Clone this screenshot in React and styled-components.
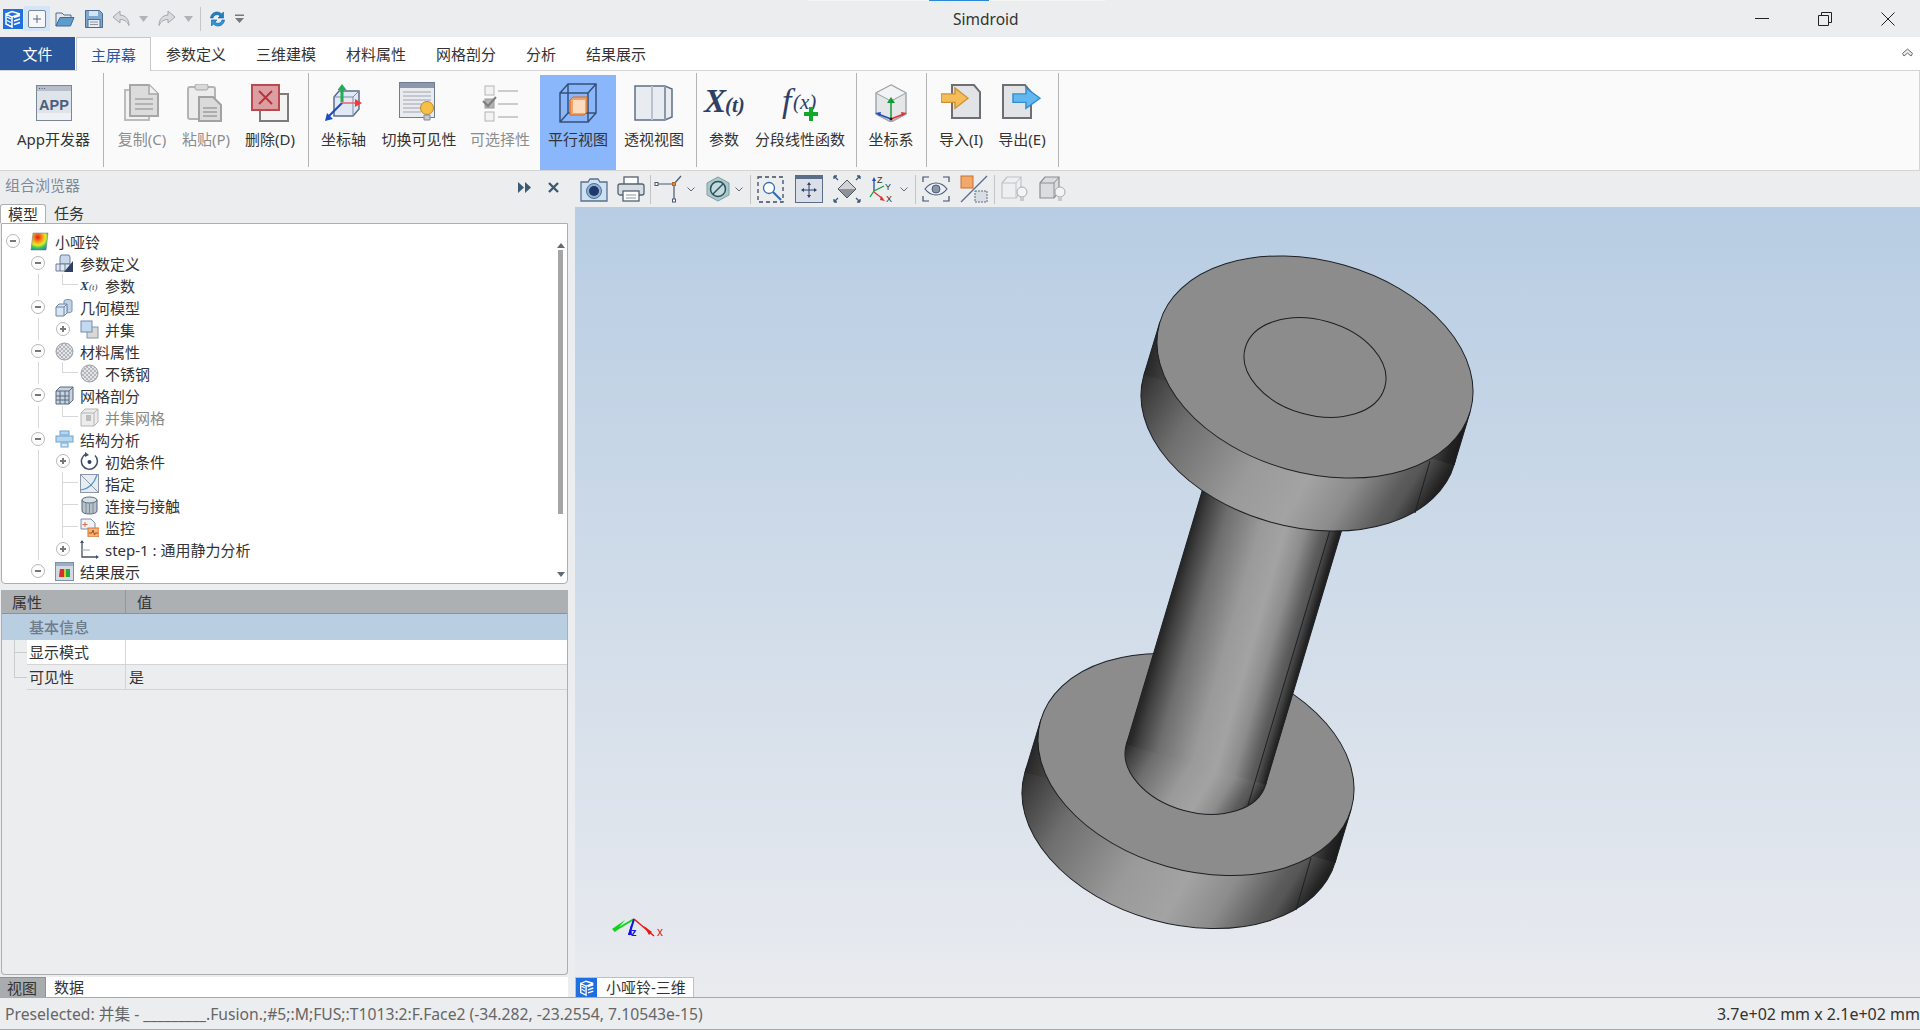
import React from "react";
import styled, { createGlobalStyle } from "styled-components";

const GlobalStyle = createGlobalStyle`
html, body { margin: 0; padding: 0; height: 100%; overflow: hidden; }
body { font-family: "Noto Sans", "Noto Sans CJK SC", sans-serif; font-size: 15px; color: #333; background: #ecedef; }
svg { display: block; }
`;

const Page = styled.div`
width: 1920px;
height: 1030px;
display: flex;
flex-direction: column;
background: #ecedef;
overflow: hidden;
`;

/* title bar */
const TitleBar = styled.div`
position: relative;
height: 37px;
flex: none;
display: flex;
align-items: center;
padding-left: 2px;
background: #ecedef;
`;
const LoadStrip = styled.div`
position: absolute;
left: 808px;
top: 0;
width: 297px;
height: 1px;
background: #f6f6f6;
&::after {
  content: "";
  position: absolute;
  left: 121px;
  width: 60px;
  height: 1px;
  background: #2b88d8;
}
`;
const QuickBtn = styled.div`
width: ${(p) => p.$w}px;
height: 25px;
display: flex;
align-items: center;
justify-content: center;
flex: none;
background: ${(p) => (p.$hover ? "#d3e5f6" : "transparent")};
`;
const QuickSep = styled.div`
width: 1px;
height: 24px;
margin: 0 1px 0 3px;
background: #c6c6c6;
`;
const AppTitle = styled.div`
margin-left: 708px;
font-size: 15.5px;
color: #333;
`;
const WinButtons = styled.div`
margin-left: auto;
display: flex;
padding-right: 25px;
gap: 49px;
color: #222;
`;

/* tab strip */
const TabStrip = styled.div`
height: 33px;
flex: none;
display: flex;
align-items: stretch;
background: #fff;
position: relative;
`;
const FileTab = styled.div`
width: 75px;
margin-right: 1px;
background: #2b579a;
color: #fff;
font-size: 15px;
display: flex;
align-items: center;
justify-content: center;
`;
const MenuTab = styled.div`
padding: 0 15px;
font-size: 15px;
display: flex;
align-items: center;
color: ${(p) => (p.$active ? "#2b579a" : "#333")};
background: ${(p) => (p.$active ? "#fafafa" : "transparent")};
${(p) => p.$active && "border: 1px solid #c8c8c8; border-bottom: none; margin-bottom: -1px; padding: 0 14px; position: relative; z-index: 1;"}
`;
const Collapse = styled.div`
position: absolute;
right: 7px;
top: 11px;
`;

/* ribbon */
const Ribbon = styled.div`
height: 99px;
flex: none;
display: flex;
background: #fafafa;
border-top: 1px solid #d4d4d4;
border-bottom: 1px solid #d4d4d4;
border-right: 1px solid #d4d4d4;
`;
const RibbonGroup = styled.div`
width: ${(p) => p.$w}px;
height: 94px;
margin-top: 2px;
display: flex;
flex: none;
box-sizing: border-box;
border-right: 1px solid #b4b4b4;
`;
const RibbonItem = styled.div`
width: ${(p) => p.$w}px;
height: 95px;
margin-top: 2px;
flex: none;
display: flex;
flex-direction: column;
align-items: center;
background: ${(p) => (p.$active ? "#8ab6fb" : "transparent")};
`;
const RibbonIcon = styled.div`
height: 40px;
margin-top: 8px;
display: flex;
align-items: center;
justify-content: center;
`;
const RibbonLabel = styled.div`
margin-top: 6px;
line-height: 20px;
font-size: 15px;
white-space: nowrap;
color: ${(p) => (p.$off ? "#8d8d8d" : "#333")};
`;

/* body */
const Main = styled.div`
flex: 1;
min-height: 0;
display: flex;
`;
const LeftPanel = styled.div`
width: 568px;
flex: none;
display: flex;
flex-direction: column;
`;
const PanelHeader = styled.div`
height: 33px;
flex: none;
box-sizing: border-box;
display: flex;
align-items: center;
padding: 0 9px 6px 5px;
color: #7d8a9a;
font-size: 15px;
`;
const PanelTools = styled.div`
margin-left: auto;
display: flex;
align-items: center;
gap: 17px;
padding-top: 6px;
`;
const ModelTabs = styled.div`
height: 19px;
flex: none;
display: flex;
font-size: 15px;
line-height: 19px;
`;
const ModelTab = styled.div`
width: ${(p) => (p.$active ? "46px" : "auto")};
box-sizing: border-box;
padding-left: ${(p) => (p.$active ? "7px" : "8px")};
background: ${(p) => (p.$active ? "#fff" : "transparent")};
${(p) => p.$active && "border: 1px solid #b0b0b0; border-bottom: none; border-radius: 3px 3px 0 0;"}
`;
const TreePanel = styled.div`
height: 361px;
flex: none;
box-sizing: border-box;
margin-left: 1px;
display: flex;
background: #fff;
border: 1px solid #aeaeae;
border-radius: 0 0 4px 4px;
`;
const TreeList = styled.div`
flex: 1;
padding-top: 6px;
`;
const TreeRowBox = styled.div`
position: relative;
height: 22px;
display: flex;
align-items: center;
padding-left: ${(p) => p.$level * 25 + 4}px;
font-size: 15px;
white-space: nowrap;
color: ${(p) => (p.$off ? "#888" : "#333")};
${(p) => p.$level === 2 && `
  &::before {
    content: "";
    position: absolute;
    left: 36px;
    top: 0;
    bottom: 0;
    width: 1px;
    background: #d8d8d8;
  }
`}
`;
const Branch = styled.div`
position: absolute;
left: 60px;
top: 0;
width: 15px;
height: ${(p) => (p.$last ? "11px" : "22px")};
border-left: 1px solid #d8d8d8;
&::after {
  content: "";
  position: absolute;
  left: 0;
  top: 10px;
  width: 15px;
  height: 1px;
  background: #d8d8d8;
}
`;
const Expander = styled.div`
width: 14px;
height: 14px;
flex: none;
box-sizing: border-box;
position: relative;
border-radius: 50%;
${(p) => p.$kind && "border: 1px solid #b8b8b8; background: #fff;"}
${(p) => p.$kind && `
  &::before {
    content: "";
    position: absolute;
    left: 3px;
    top: 5px;
    width: 6px;
    height: 2px;
    background: #777;
  }
`}
${(p) => p.$kind === "+" && `
  &::after {
    content: "";
    position: absolute;
    left: 5px;
    top: 3px;
    width: 2px;
    height: 6px;
    background: #777;
  }
`}
`;
const TreeIcon = styled.div`
width: 19px;
height: 19px;
margin: 0 6px 0 10px;
flex: none;
`;
const ScrollBar = styled.div`
width: 9px;
margin-right: 2px;
display: flex;
flex-direction: column;
align-items: center;
padding-top: 19px;
`;
const ScrollArrow = styled.div`
width: 0;
height: 0;
border-left: 4px solid transparent;
border-right: 4px solid transparent;
${(p) => (p.$down ? "border-top: 5px solid #5f6d78; margin-top: 58px;" : "border-bottom: 5px solid #5f6d78;")}
`;
const ScrollThumb = styled.div`
width: 5px;
height: 264px;
margin-top: 2px;
background: #a5a5a5;
`;
const PropsPanel = styled.div`
height: 385px;
flex: none;
box-sizing: border-box;
margin: 6px 0 2px 1px;
border: 1px solid #aeaeae;
border-top: none;
border-radius: 0 0 4px 4px;
`;
const PropsHead = styled.div`
height: 24px;
display: grid;
grid-template-columns: 123px 1fr;
background: #adb0b3;
border-bottom: 1px solid #8f9295;
box-sizing: border-box;
line-height: 24px;
`;
const PropsHeadCell = styled.div`
padding-left: ${(p) => (p.$second ? "11px" : "10px")};
${(p) => p.$second && "border-left: 1px solid #94979a;"}
`;
const PropsGroup = styled.div`
height: 26px;
line-height: 26px;
padding-left: 27px;
background: #bacee1;
color: #6e7c8c;
font-weight: 500;
`;
const PropsRow = styled.div`
height: 24.5px;
display: grid;
grid-template-columns: 25px 98px 1fr;
line-height: 24px;
`;
const PropIndent = styled.div`
position: relative;
&::before {
  content: "";
  position: absolute;
  left: 12px;
  top: 0;
  height: ${(p) => (p.$last ? "12px" : "100%")};
  width: 1px;
  background: #ccc;
}
&::after {
  content: "";
  position: absolute;
  left: 12px;
  top: 12px;
  width: 13px;
  height: 1px;
  background: #ccc;
}
`;
const PropName = styled.div`
padding-left: 2px;
background: ${(p) => (p.$alt ? "#ecedef" : "#fff")};
border-bottom: 1px solid #d4d4d4;
`;
const PropValue = styled.div`
padding-left: 3px;
background: ${(p) => (p.$alt ? "#ecedef" : "#fff")};
border-bottom: 1px solid #d4d4d4;
border-left: 1px solid #d4d4d4;
`;
const BottomTabs = styled.div`
height: 20px;
flex: none;
display: flex;
background: #fff;
line-height: 20px;
`;
const BottomTab = styled.div`
width: ${(p) => (p.$active ? "46px" : "auto")};
box-sizing: border-box;
padding-left: ${(p) => (p.$active ? "7px" : "8px")};
background: ${(p) => (p.$active ? "#a9acaf" : "transparent")};
${(p) => p.$active && "border-right: 1px solid #8f9295; border-top: 1px solid #8f9295;"}
`;

/* right side */
const RightPane = styled.div`
flex: 1;
margin-left: 7px;
display: flex;
flex-direction: column;
min-width: 0;
`;
const Toolbar = styled.div`
height: 36px;
flex: none;
display: flex;
align-items: center;
`;
const ToolBtn = styled.div`
width: ${(p) => p.$w}px;
margin-left: ${(p) => p.$ml || 0}px;
flex: none;
display: flex;
align-items: center;
justify-content: center;
`;
const ToolSep = styled.div`
width: 1px;
height: 29px;
margin-left: ${(p) => p.$ml || 0}px;
background: #c4c4c4;
flex: none;
`;
const Viewport = styled.div`
position: relative;
flex: 1;
min-height: 0;
background: linear-gradient(180deg, #b8cde3 0%, #e9ebef 100%);
`;
const ModelSvg = styled.svg`
width: 100%;
height: 100%;
`;
const ViewTab = styled.div`
position: absolute;
left: 0;
bottom: 0;
width: 119px;
height: 20px;
box-sizing: border-box;
display: flex;
align-items: center;
background: #fff;
border: 1px solid #c0c0c0;
border-bottom: none;
line-height: 19px;
`;
const ViewTabIcon = styled.div`
width: 21px;
height: 19px;
background: #1f6fe0;
display: flex;
align-items: center;
justify-content: center;
margin-right: 9px;
`;

/* status */
const StatusBar = styled.div`
height: 33px;
flex: none;
box-sizing: border-box;
display: flex;
align-items: center;
justify-content: space-between;
padding-left: 5px;
background: #ecedef;
border-top: 1px solid #a8a8a8;
border-bottom: 1px solid #a8a8a8;
font-size: 15.7px;
color: #666;
white-space: nowrap;
`;
const StatusRight = styled.div`
color: #333;
font-size: 16px;
`;

/* icons */
const Svg = ({ s = 40, children }) => (
  <svg width={s} height={s} viewBox={`0 0 ${s} ${s}`} fill="none">{children}</svg>
);

const LogoIcon = ({ s = 20 }) => (
  <svg width={s} height={s} viewBox="0 0 20 20" fill="none">
    <rect width="20" height="20" fill="#1f6fe0" />
    <path d="M3 5l6-2.5 8 2.5M3 5v10l6 3V8L3 5zM9 8l8-3M11 8.5l6-2M11 12l6-2M11 15.5l6-2" stroke="#fff" strokeWidth="1.5" />
    <path d="M4 8l4 2M4 11.5l4 2" stroke="#fff" strokeWidth="1.3" />
  </svg>
);
const NewIcon = () => (
  <svg width="18" height="18" viewBox="0 0 18 18" fill="none">
    <rect x=".5" y=".5" width="17" height="17" rx="1.5" fill="#f6f7f9" stroke="#7b8796" />
    <path d="M9 5v8M5 9h8" stroke="#58687e" />
  </svg>
);
const OpenIcon = () => (
  <svg width="20" height="18" viewBox="0 0 20 18" fill="none">
    <path d="M1 3h6l2 2h7v3H5L1 16z" fill="#e5e9ee" stroke="#4d6d90" />
    <path d="M1 16L5 7.5h14L15.5 16z" fill="#5f9bcb" stroke="#3f6d96" />
  </svg>
);
const SaveIcon = () => (
  <svg width="18" height="18" viewBox="0 0 18 18" fill="none">
    <path d="M.5.5h14l3 3v14H.5z" fill="#7ea8cf" stroke="#4c6a8a" />
    <rect x="4" y="1" width="9" height="5" fill="#d5e4f2" />
    <rect x="3" y="9.5" width="12" height="8" fill="#e9edf1" stroke="#4c6a8a" />
    <path d="M5 12h8M5 14.5h8" stroke="#8a98a8" />
  </svg>
);
const UndoIcon = ({ flip }) => (
  <svg width="19" height="18" viewBox="0 0 19 18" fill="none" style={flip ? { transform: "scaleX(-1)" } : undefined}>
    <path d="M8 1L1 7l7 6V9.5c4 0 7 1.5 9 6 0-6-3-10-9-10.5z" fill="#d9dbde" stroke="#a2a6ab" />
  </svg>
);
const Drop = ({ c = "#b0b3b7" }) => (
  <svg width="9" height="6" viewBox="0 0 9 6"><path d="M0 0h9L4.5 6z" fill={c} /></svg>
);
const RefreshIcon = () => (
  <svg width="17" height="18" viewBox="0 0 17 18" fill="none">
    <path d="M1.5 8C2 4 5 2 8 2c2 0 3.500.7 4.500 2l2-2v6H9l2-2c-1-1-2-1.300-3-1.300-2 0-3.500 1.300-4 3.300z" fill="#1e7fc4" stroke="#155d92" strokeWidth=".6" />
    <path d="M15.500 10c-.5 4-3.500 6-6.500 6-2 0-3.500-.7-4.500-2l-2 2v-6H8l-2 2c1 1 2 1.300 3 1.300 2 0 3.500-1.300 4-3.300z" fill="#2a95d8" stroke="#155d92" strokeWidth=".6" />
  </svg>
);
const MoreIcon = () => (
  <svg width="9" height="9" viewBox="0 0 9 9"><path d="M0 .5h9v1.500H0zM0 4h9L4.500 9z" fill="#75787c" /></svg>
);

const AppIcon = () => (
  <Svg s={36}>
    <rect x=".5" y=".5" width="35" height="35" fill="#dfe3ea" stroke="#7a8797" />
    <rect x="1" y="1" width="34" height="5" fill="#b7bec9" />
    <path d="M3 3.500h1M5.500 3.500h1M8 3.500h1" stroke="#4b5f7e" />
    <rect x="1" y="28" width="34" height="7" fill="#eef0f4" />
    <text x="18" y="25" textAnchor="middle" fontFamily="Liberation Sans, sans-serif" fontWeight="700" fontSize="14.500" fill="#4b5f7e">APP</text>
  </Svg>
);
const CopyIcon = () => (
  <Svg s={38}>
    <path d="M2 6h24v30H2z" fill="#f2f2f2" stroke="#bcbcbc" strokeWidth="2" />
    <path d="M7 1h19l9 9v22H7z" fill="#dcdcdc" stroke="#a6a6a6" strokeWidth="2" />
    <path d="M26 1v9h9" fill="#efefef" stroke="#a6a6a6" strokeWidth="1.500" />
    <path d="M12 15h18M12 20h18M12 25h18" stroke="#a4a4a4" strokeWidth="1.500" />
  </Svg>
);
const PasteIcon = () => (
  <Svg s={38}>
    <rect x="1" y="3" width="27" height="32" rx="2" fill="#ececec" stroke="#b4b4b4" strokeWidth="2" />
    <rect x="8" y="0" width="13" height="6" rx="2" fill="#d8d8d8" stroke="#a6a6a6" />
    <path d="M12 13h14l8 8v16H12z" fill="#dadada" stroke="#a2a2a2" strokeWidth="2" />
    <path d="M16 24h14M16 28h14M16 32h14" stroke="#9e9e9e" strokeWidth="1.300" />
  </Svg>
);
const DeleteIcon = () => (
  <Svg s={38}>
    <rect x="9" y="10" width="28" height="27" fill="#f3f3f3" stroke="#7c7c7c" strokeWidth="2" />
    <rect x="1" y="1" width="27" height="25" fill="#dc9ea0" stroke="#b84a50" strokeWidth="2" />
    <path d="M8 7l13 13M21 7L8 20" stroke="#b8323a" strokeWidth="1.800" />
  </Svg>
);
const AxisIcon = () => (
  <Svg s={40}>
    <path d="M10 14l5-6h20v18l-6 7H10z" fill="#dfe8f4" stroke="#5b6d88" strokeWidth="1.500" />
    <path d="M10 14h19v19M29 14l6-6" stroke="#7d8da4" />
    <path d="M16 2l-4.500 6h3V20h3V8h3z" fill="#1fae52" transform="translate(2 -1)" />
    <path d="M18 20h14" stroke="#f06060" strokeWidth="1.500" />
    <path d="M31 16l7 4-7 4z" fill="#ee3b3b" />
    <path d="M18 20L4 34" stroke="#1d4fc0" strokeWidth="2.200" />
    <path d="M1 38l2-8 6 6z" fill="#1d4fc0" />
  </Svg>
);
const ToggleIcon = () => (
  <svg width="40" height="42" viewBox="0 0 40 42" fill="none">
    <rect x=".5" y=".5" width="35" height="35" fill="#e9ebef" stroke="#6e7d92" />
    <rect x="1" y="1" width="34" height="5" fill="#8c98aa" />
    <path d="M4 10h28M4 14h28M4 18h28M4 22h20M4 26h18M4 30h18" stroke="#9ba4b1" />
    <circle cx="28" cy="26" r="6.500" fill="#f6bf45" stroke="#b98a28" />
    <path d="M25 33h6v5h-6z" fill="#c5cbd4" stroke="#808a98" />
  </svg>
);
const SelectIcon = () => (
  <svg width="42" height="38" viewBox="-4 0 42 38" fill="none">
    <rect x="2" y="2" width="9" height="9" fill="#f3f3f3" stroke="#b4b4b4" />
    <rect x="2" y="15" width="9" height="9" fill="#b4b4b4" stroke="#9a9a9a" />
    <path d="M0 17l5 5 8-9" stroke="#7d7d7d" strokeWidth="2" />
    <rect x="2" y="28" width="9" height="9" fill="#f3f3f3" stroke="#b4b4b4" />
    <path d="M15 7h20M15 20h20M15 33h20" stroke="#bdbdbd" strokeWidth="1.500" />
  </svg>
);
const ParallelIcon = () => (
  <Svg s={40}>
    <path d="M2 10h28v29H2zM2 10l8-9h28v29l-8 9M30 10l8-9M10 1v29h28M10 30l-8 9" stroke="#35507a" strokeWidth="1.500" />
    <path d="M12 17l3-3h14v15l-3 3H12z" fill="#f0a468" stroke="#d06a22" />
    <path d="M15 17h12v13H15z" fill="#fbdcc0" />
  </Svg>
);
const PerspIcon = () => (
  <Svg s={40}>
    <path d="M1 3l7 2h22v30H8l-7 2z" fill="#f2f4f7" />
    <path d="M1 3h30l7 3v28l-7 3H1z" fill="#e8ecf1" stroke="#5d6f8a" strokeWidth="1.500" />
    <path d="M31 3v34M18 3v34" stroke="#b9c2ce" strokeWidth="2" />
    <path d="M31 3v34" stroke="#5d6f8a" />
  </Svg>
);
const XtIcon = () => (
  <svg width="50" height="40" viewBox="-4 -2 50 40">
    <text x="1" y="27" fontFamily="Liberation Serif, serif" fontStyle="italic" fontWeight="700" fontSize="33" fill="#2e4066">X</text>
    <text x="22" y="27" fontFamily="Liberation Serif, serif" fontStyle="italic" fontWeight="700" fontSize="21" fill="#2e4066">(t)</text>
  </svg>
);
const FxIcon = () => (
  <svg width="52" height="40" viewBox="-4 -2 52 40">
    <text x="4" y="27" fontFamily="Liberation Serif, serif" fontStyle="italic" fontSize="34" fill="#2e4066">f</text>
    <text x="15" y="24" fontFamily="Liberation Serif, serif" fontStyle="italic" fontSize="21" fill="#2e4066">(x)</text>
    <path d="M31 22h4v5h5v4h-5v5h-4v-5h-5v-4h5z" fill="#12a92a" />
  </svg>
);
const SystemIcon = () => (
  <Svg s={38}>
    <path d="M19 1l15 8v21l-15 8-15-8V9z" fill="#e5e6e8" stroke="#a2a6ab" strokeWidth="1.500" />
    <path d="M4 9l15 8 15-8" stroke="#b0b4b9" />
    <path d="M19 1l15 8-15 8L4 9z" fill="#f2f3f4" stroke="#a2a6ab" />
    <path d="M19 34V17" stroke="#119b33" strokeWidth="1.500" />
    <path d="M15 19l4-6 4 6z" fill="#119b33" />
    <path d="M19 35L6 30" stroke="#1d4fc0" strokeWidth="1.800" />
    <path d="M19 35l13-5" stroke="#e33131" strokeWidth="1.800" />
    <path d="M3 29l6-1-1 4z" fill="#1d4fc0" />
    <path d="M35 29l-6-1 1 4z" fill="#e33131" />
    <circle cx="19" cy="35" r="1.500" fill="#222" />
  </Svg>
);
const ImportIcon = () => (
  <Svg s={40}>
    <path d="M11 2h22l6 7v26H11z" fill="#e1e3e6" stroke="#6d6f73" strokeWidth="2" />
    <path d="M0 14h14V7l13 12-13 12v-7H0z" transform="translate(0 -1) scale(1 .85)" fill="#f4bd5a" stroke="#cf9133" strokeWidth="1.500" />
  </Svg>
);
const ExportIcon = () => (
  <Svg s={40}>
    <path d="M1 2h22l6 7v26H1z" fill="#e1e3e6" stroke="#6d6f73" strokeWidth="2" />
    <path d="M11 14h13V7l14 12-14 12v-7H11z" transform="translate(0 -1) scale(1 .85)" fill="#62b8ee" stroke="#2f8fd0" strokeWidth="1.500" />
  </Svg>
);

/* tree icons */
const RainbowIcon = () => (
  <svg width="19" height="19" viewBox="0 0 19 19">
    <defs>
      <radialGradient id="heat" cx=".4" cy=".25" r=".85">
        <stop offset="0" stopColor="#e51818" />
        <stop offset=".35" stopColor="#f7a21a" />
        <stop offset=".55" stopColor="#e8e82a" />
        <stop offset=".75" stopColor="#34c65a" />
        <stop offset="1" stopColor="#1d7be0" />
      </radialGradient>
    </defs>
    <path d="M3 1h15l-2 17H1z" fill="url(#heat)" stroke="#5b6d88" strokeWidth=".5" />
  </svg>
);
const ParamTreeIcon = () => (
  <Svg s={19}>
    <path d="M5 3l1-2h8l1 2v7H5z" fill="#c8d8ec" stroke="#6a7d98" />
    <path d="M1 10h14v7H1zM5 10v7M10 10v7" fill="#e3e8ef" stroke="#6a7d98" />
    <path d="M18 7v11h-9z" fill="#2e4066" />
  </Svg>
);
const XtSmall = () => (
  <svg width="19" height="19" viewBox="0 0 19 19">
    <text x="0" y="14" fontFamily="Liberation Serif, serif" fontStyle="italic" fontWeight="700" fontSize="13" fill="#2e4066">X</text>
    <text x="9" y="14" fontFamily="Liberation Serif, serif" fontStyle="italic" fontSize="9" fill="#2e4066">(t)</text>
  </svg>
);
const GeoIcon = () => (
  <Svg s={19}>
    <path d="M9 3c0-2 8-2 8 0v10c0 1.500-3 2-5 1.800V8H9z" fill="#bcd3ea" stroke="#7d8ea5" />
    <path d="M1 9l3-3h8v9l-3 3H1z" fill="#d8e5f3" stroke="#6f84a0" />
    <path d="M1 9h8v9M9 9l3-3" stroke="#6f84a0" />
  </Svg>
);
const UnionIcon = () => (
  <Svg s={19}>
    <rect x="7" y="7" width="11" height="11" fill="#d8d8d8" stroke="#8a96a5" />
    <rect x="1" y="1" width="11" height="11" fill="#c3d9ef" stroke="#6f8db0" />
  </Svg>
);
const MatIcon = () => (
  <Svg s={19}>
    <defs>
      <pattern id="mat" width="4" height="4" patternUnits="userSpaceOnUse">
        <rect width="4" height="4" fill="#e3e4e6" />
        <rect width="2" height="2" fill="#b3b6ba" />
        <rect x="2" y="2" width="2" height="2" fill="#b3b6ba" />
      </pattern>
    </defs>
    <circle cx="9.500" cy="9.500" r="8.500" fill="url(#mat)" stroke="#9a9da2" />
  </Svg>
);
const MeshIcon = () => (
  <Svg s={19}>
    <path d="M1 5l4-4h13v13l-4 4H1z" fill="#c9d3e0" stroke="#56677f" />
    <path d="M1 5h13v13M14 5l4-4M5 5v13M10 5v13M1 10h13M1 14h13" stroke="#56677f" />
  </Svg>
);
const MeshOffIcon = () => (
  <Svg s={19}>
    <path d="M1 5l4-4h13v13l-4 4H1z" fill="#ececec" stroke="#b4b4b4" />
    <path d="M1 5h13v13M14 5l4-4" stroke="#b4b4b4" />
    <rect x="6" y="7" width="5" height="6" fill="#bdbdbd" />
  </Svg>
);
const AnalysisIcon = () => (
  <Svg s={19}>
    <rect x="5" y="1" width="9" height="4" fill="#b6d6ee" stroke="#6aa4d0" />
    <rect x="1" y="6" width="17" height="6" fill="#b6d6ee" stroke="#6aa4d0" />
    <rect x="6" y="13" width="7" height="4" fill="#d8e8f4" stroke="#6aa4d0" />
  </Svg>
);
const InitIcon = () => (
  <Svg s={19}>
    <path d="M15 3.500A8 8 0 1 1 6 2" stroke="#3f5168" strokeWidth="1.500" />
    <path d="M5 0v5l4-2z" fill="#3f5168" />
    <circle cx="9.500" cy="10" r="2" fill="#2e4066" />
  </Svg>
);
const AssignIcon = () => (
  <Svg s={19}>
    <rect x=".5" y=".5" width="18" height="18" fill="#e8ebf0" stroke="#8a98aa" />
    <path d="M1 1l17 17" stroke="#8a98aa" />
    <path d="M1 16C8 15 14 10 17 1" stroke="#4f92c8" strokeWidth="1.200" />
  </Svg>
);
const ContactIcon = () => (
  <Svg s={19}>
    <path d="M2 4v11c0 4 15 4 15 0V4z" fill="#b6c2c8" stroke="#56677f" />
    <ellipse cx="9.500" cy="4" rx="7.500" ry="3" fill="#d7e0e4" stroke="#56677f" />
    <path d="M6 7v10M9.500 7.500v10M13 7v10" stroke="#7d8c96" />
  </Svg>
);
const MonitorIcon = () => (
  <Svg s={19}>
    <path d="M1 1h10l4 4v6H1z" fill="#f0f2f5" stroke="#7d8ea5" />
    <path d="M5 4v5M2.500 6.500h5" stroke="#d96a4a" />
    <rect x="8" y="10" width="11" height="9" fill="#f6b27a" stroke="#d07a3a" />
    <path d="M9 15h3l1-3 1.500 5 1-2H18" stroke="#a8501c" />
  </Svg>
);
const StepIcon = () => (
  <Svg s={19}>
    <path d="M2 1v16h15" stroke="#3f5168" strokeWidth="1.300" />
    <path d="M2 10l8 0" stroke="#9aa8b8" />
    <path d="M0 3l2-3 2 3zM16 15l3 2-3 2z" fill="#3f5168" />
  </Svg>
);
const ResultIcon = () => (
  <Svg s={19}>
    <rect x=".5" y=".5" width="18" height="18" fill="#d3dae3" stroke="#7d8ea5" />
    <rect x="1" y="1" width="17" height="3" fill="#9faebf" />
    <path d="M5 7h10v8H4z" fill="#e8c026" />
    <path d="M5 7h4v8H4z" fill="#d92c2c" />
    <path d="M11 7h4v8h-4z" fill="#24a84a" />
  </Svg>
);

/* viewport toolbar icons */
const CameraIcon = () => (
  <svg width="28" height="25" viewBox="0 0 28 25" fill="none">
    <path d="M1 5h7l2-3h8l2 3h7v19H1z" fill="#cfe0f2" stroke="#55708f" strokeWidth="1.300" />
    <circle cx="14" cy="14" r="7.500" fill="#8fb0d2" stroke="#55708f" />
    <circle cx="14" cy="14" r="5" fill="#1f3a6a" />
  </svg>
);
const PrinterIcon = () => (
  <svg width="28" height="26" viewBox="0 0 28 26" fill="none">
    <rect x="7" y="1" width="14" height="8" fill="#fff" stroke="#54616f" strokeWidth="1.300" />
    <rect x="1" y="8" width="26" height="11" rx="2" fill="#d7dce2" stroke="#54616f" strokeWidth="1.300" />
    <rect x="6" y="15" width="16" height="10" fill="#fff" stroke="#54616f" strokeWidth="1.300" />
    <path d="M9 19h10M9 22h10" stroke="#8a96a3" />
  </svg>
);
const MeasureIcon = () => (
  <svg width="30" height="28" viewBox="0 0 30 28" fill="none">
    <path d="M3 9h17M20 9v15M20 9l7-8" stroke="#4a5a70" strokeWidth="1.200" />
    <rect x="1" y="7.500" width="3" height="3" fill="#fff" stroke="#4a5a70" />
    <rect x="18.500" y="7.500" width="3" height="3" fill="#e08a3a" stroke="#b4642a" />
    <rect x="18.500" y="24" width="3" height="3" fill="#fff" stroke="#4a5a70" />
  </svg>
);
const Chevron = () => (
  <svg width="8" height="5" viewBox="0 0 8 5" fill="none"><path d="M.5.5L4 4 7.500.5" stroke="#5f6b78" /></svg>
);
const ProhibitIcon = () => (
  <svg width="24" height="26" viewBox="0 0 24 26" fill="none">
    <path d="M12 1l11 6v12l-11 6L1 19V7z" fill="#a9c9cb" stroke="#7f9da0" />
    <circle cx="12" cy="13" r="7.500" fill="#c2dbdc" stroke="#2f4f58" strokeWidth="1.500" />
    <path d="M7 18l10-10" stroke="#2f4f58" strokeWidth="1.500" />
  </svg>
);
const ZoomBoxIcon = () => (
  <svg width="27" height="27" viewBox="0 0 27 27" fill="none">
    <rect x="1" y="1" width="25" height="25" stroke="#3d4c60" strokeWidth="1.300" strokeDasharray="4 3" />
    <circle cx="12" cy="12" r="5.500" fill="#fff" stroke="#2f6fb0" strokeWidth="1.300" />
    <path d="M16 16l8 8" stroke="#2f6fb0" strokeWidth="2.200" />
  </svg>
);
const FitIcon = () => (
  <svg width="28" height="28" viewBox="0 0 28 28" fill="none">
    <rect x=".5" y=".5" width="27" height="27" fill="#dbe0e8" stroke="#5a6d88" />
    <rect x="1" y="1" width="26" height="3" fill="#5a6d88" />
    <path d="M14 9v12M8 15h12" stroke="#2e4066" />
    <path d="M14 7l-2 3h4zM14 23l-2-3h4zM6 15l3-2v4zM22 15l-3-2v4z" fill="#2e4066" />
  </svg>
);
const IsoIcon = () => (
  <svg width="28" height="28" viewBox="0 0 28 28" fill="none">
    <path d="M14 5l9 9-9 9-9-9z" fill="#8e9196" />
    <path d="M14 5l9 9H5z" fill="#cfd2d6" />
    <path d="M14 5l9 9-9 9-9-9z" stroke="#505860" />
    <path d="M1 1h3M1 1v3M27 1h-3M27 1v3M1 27h3M1 27v-3M27 27h-3M27 27v-3M1 1l4 4M27 1l-4 4M1 27l4-4M27 27l-4-4" stroke="#3d5a7c" strokeWidth="1.300" />
  </svg>
);
const AxesIcon = () => (
  <svg width="26" height="28" viewBox="0 0 26 28" fill="none">
    <path d="M5 16V5" stroke="#1d4fc0" strokeWidth="1.300" />
    <path d="M3 6l2-4 2 4z" fill="#1d4fc0" />
    <path d="M5 16l10-5" stroke="#12a040" strokeWidth="1.300" />
    <path d="M5 16L1 22" stroke="#12a040" strokeWidth="1.300" />
    <path d="M5 17l9 7" stroke="#e33131" strokeWidth="1.300" />
    <path d="M12 21l4 5-5-1z" fill="#e33131" />
    <text x="8" y="8" fontFamily="Liberation Sans, sans-serif" fontSize="9" fill="#333">Z</text>
    <text x="16" y="15" fontFamily="Liberation Sans, sans-serif" fontSize="9" fill="#333">Y</text>
    <text x="17" y="27" fontFamily="Liberation Sans, sans-serif" fontSize="9" fill="#333">X</text>
  </svg>
);
const EyeIcon = () => (
  <svg width="28" height="26" viewBox="0 0 28 26" fill="none">
    <path d="M1 6V1h6M21 1h6v5M1 20v5h6M21 25h6v-5" stroke="#3d5068" strokeWidth="1.200" />
    <path d="M3 13c6-8 16-8 22 0-6 8-16 8-22 0z" fill="#e9eef3" stroke="#4a5c74" strokeWidth="1.200" />
    <circle cx="14" cy="13" r="4" fill="#8a97a8" stroke="#4a5c74" />
  </svg>
);
const SplitIcon = () => (
  <svg width="28" height="28" viewBox="0 0 28 28" fill="none">
    <rect x="1" y="1" width="12" height="12" fill="#f2a868" stroke="#c8702e" />
    <rect x="15" y="16" width="12" height="11" fill="#d9dee5" stroke="#5a6d88" strokeDasharray="2 1" />
    <path d="M27 1L1 27" stroke="#5a6d88" strokeWidth="1.200" />
  </svg>
);
const BulbCube = ({ dark }) => (
  <svg width="28" height="28" viewBox="0 0 28 28" fill="none">
    <path d="M1 8l5-6h14v15l-5 6H1z" fill={dark ? "#dadcdf" : "#eeeff1"} stroke={dark ? "#8b8e92" : "#c0c2c5"} strokeWidth="1.200" />
    <path d="M1 8h14v15M15 8l5-6" stroke={dark ? "#8b8e92" : "#c0c2c5"} />
    <circle cx="21" cy="17" r="5" fill="#f4f4f4" stroke="#a8aaad" />
    <path d="M19 22h4v4h-4z" fill="#c8cacd" />
  </svg>
);

/* 3d model, computed from the ellipse parameters */
const TILT = (15.8 * Math.PI) / 180;
const cosT = Math.cos(TILT);
const sinT = Math.sin(TILT);
const pointOn = (c, rx, ry, t) => [
  c[0] + rx * Math.cos(t) * cosT - ry * Math.sin(t) * sinT,
  c[1] + rx * Math.cos(t) * sinT + ry * Math.sin(t) * cosT,
];
const tangents = (c, rx, ry, d) => {
  const dx = d[0] * cosT + d[1] * sinT;
  const dy = -d[0] * sinT + d[1] * cosT;
  const t = Math.atan2(-ry * dx, rx * dy);
  const a = pointOn(c, rx, ry, t);
  const b = pointOn(c, rx, ry, t + Math.PI);
  return a[0] < b[0] ? [a, b] : [b, a];
};
const SHADE = [
  [0, "#282828"], [0.06, "#404040"], [0.2, "#6e6e6e"], [0.45, "#9a9a9a"], [0.62, "#a3a3a3"],
  [0.75, "#8c8c8c"], [0.87, "#5c5c5c"], [0.9, "#565656"], [0.97, "#242424"], [1, "#1a1a1a"],
];
const EDGE = "#1c2024";
const FACE = "#8c8c8c";

const Prism = ({ id, c, rx, ry, d, cap }) => {
  const [l, r] = tangents(c, rx, ry, d);
  const l2 = [l[0] + d[0], l[1] + d[1]];
  const r2 = [r[0] + d[0], r[1] + d[1]];
  const deg = (TILT * 180) / Math.PI;
  const end = [c[0] + d[0], c[1] + d[1]];
  return (
    <g>
      <defs>
        <linearGradient id={id} gradientUnits="userSpaceOnUse" x1={l[0]} y1={l[1]} x2={r[0]} y2={r[1]}>
          {SHADE.map(([o, col]) => <stop key={o} offset={o} stopColor={col} />)}
        </linearGradient>
      </defs>
      <ellipse cx={end[0]} cy={end[1]} rx={rx} ry={ry} transform={`rotate(${deg} ${end[0]} ${end[1]})`} fill={`url(#${id})`} stroke={EDGE} />
      <polygon points={[l, r, r2, l2].map((p) => p.join(",")).join(" ")} fill={`url(#${id})`} />
      <path d={`M${l[0]} ${l[1]}L${l2[0]} ${l2[1]}M${r[0]} ${r[1]}L${r2[0]} ${r2[1]}`} stroke={EDGE} />
      {cap && <ellipse cx={c[0]} cy={c[1]} rx={rx} ry={ry} transform={`rotate(${deg} ${c[0]} ${c[1]})`} fill={FACE} stroke={EDGE} />}
    </g>
  );
};

const Dumbbell = () => (
  <ModelSvg viewBox="575 207 1345 790" preserveAspectRatio="none">
    <Prism id="lowDisk" c={[1196, 764.5]} rx={161.5} ry={106} d={[-16, 53]} cap />
    <path d="M1311 858L1296 910" stroke={EDGE} />
    <Prism id="stem" c={[1299, 420]} rx={72.5} ry={47.6} d={[-103, 344.5]} />
    <path d="M1248 805L1330 530" stroke={EDGE} />
    <Prism id="topDisk" c={[1315, 367]} rx={161.5} ry={106} d={[-16, 53]} cap />
    <path d="M1430 461L1415 513" stroke={EDGE} />
    <ellipse cx="1315" cy="367.500" rx="72.500" ry="47.600" transform="rotate(15.8 1315 367.500)" fill="none" stroke={EDGE} />
    <path d="M634 919L614 931" stroke="#12d21c" strokeWidth="2" />
    <path d="M625 920l-10 12-3-3z" fill="#12d21c" />
    <path d="M634 919l-5 16" stroke="#1414e0" strokeWidth="2" />
    <path d="M631 925l1 10-4 0z" fill="#1414e0" />
    <path d="M634 919l20 17" stroke="#ee1414" strokeWidth="1.500" />
    <path d="M644 926l8 6-3 3z" fill="#ee1414" />
    <text x="631" y="936" fontFamily="Liberation Sans, sans-serif" fontSize="11" fontWeight="700" fill="#1414e0">z</text>
    <text x="657" y="936" fontFamily="Liberation Sans, sans-serif" fontSize="12" fill="#ee1414">x</text>
  </ModelSvg>
);

/* data */
const MENU = ["参数定义", "三维建模", "材料属性", "网格剖分", "分析", "结果展示"];
const RIBBON = [
  { w: 104, items: [{ w: 107, label: "App开发器", Icon: AppIcon }] },
  { w: 205, items: [
    { w: 76, label: "复制(C)", Icon: CopyIcon, off: true },
    { w: 52, label: "粘贴(P)", Icon: PasteIcon, off: true },
    { w: 76, label: "删除(D)", Icon: DeleteIcon },
  ] },
  { w: 388, items: [
    { w: 69, label: "坐标轴", Icon: AxisIcon },
    { w: 82, label: "切换可见性", Icon: ToggleIcon },
    { w: 80, label: "可选择性", Icon: SelectIcon, off: true },
    { w: 76, label: "平行视图", Icon: ParallelIcon, active: true },
    { w: 76, label: "透视视图", Icon: PerspIcon },
  ] },
  { w: 160, items: [
    { w: 54, label: "参数", Icon: XtIcon },
    { w: 98, label: "分段线性函数", Icon: FxIcon },
  ] },
  { w: 70, items: [{ w: 68, label: "坐标系", Icon: SystemIcon }] },
  { w: 132, items: [
    { w: 68, label: "导入(I)", Icon: ImportIcon },
    { w: 54, label: "导出(E)", Icon: ExportIcon },
  ] },
];
const TREE = [
  { level: 0, exp: "-", label: "小哑铃", Icon: RainbowIcon },
  { level: 1, exp: "-", label: "参数定义", Icon: ParamTreeIcon },
  { level: 2, branch: "last", label: "参数", Icon: XtSmall },
  { level: 1, exp: "-", label: "几何模型", Icon: GeoIcon },
  { level: 2, exp: "+", label: "并集", Icon: UnionIcon },
  { level: 1, exp: "-", label: "材料属性", Icon: MatIcon },
  { level: 2, branch: "last", label: "不锈钢", Icon: MatIcon },
  { level: 1, exp: "-", label: "网格剖分", Icon: MeshIcon },
  { level: 2, branch: "last", label: "并集网格", Icon: MeshOffIcon, off: true },
  { level: 1, exp: "-", label: "结构分析", Icon: AnalysisIcon },
  { level: 2, exp: "+", label: "初始条件", Icon: InitIcon },
  { level: 2, branch: "mid", label: "指定", Icon: AssignIcon },
  { level: 2, branch: "mid", label: "连接与接触", Icon: ContactIcon },
  { level: 2, branch: "mid", label: "监控", Icon: MonitorIcon },
  { level: 2, exp: "+", label: "step-1 : 通用静力分析", Icon: StepIcon },
  { level: 1, exp: "-", label: "结果展示", Icon: ResultIcon },
];

const App = () => (
  <Page>
    <GlobalStyle />
    <TitleBar>
      <LoadStrip />
      <QuickBtn $w={22}><LogoIcon /></QuickBtn>
      <QuickBtn $w={26} $hover><NewIcon /></QuickBtn>
      <QuickBtn $w={30}><OpenIcon /></QuickBtn>
      <QuickBtn $w={28}><SaveIcon /></QuickBtn>
      <QuickBtn $w={26}><UndoIcon /></QuickBtn>
      <QuickBtn $w={18}><Drop /></QuickBtn>
      <QuickBtn $w={28}><UndoIcon flip /></QuickBtn>
      <QuickBtn $w={17}><Drop /></QuickBtn>
      <QuickSep />
      <QuickBtn $w={31}><RefreshIcon /></QuickBtn>
      <QuickBtn $w={12}><MoreIcon /></QuickBtn>
      <AppTitle>Simdroid</AppTitle>
      <WinButtons>
        <svg width="14" height="14" viewBox="0 0 14 14" fill="none"><path d="M0 6.500h14" stroke="currentColor" /></svg>
        <svg width="14" height="14" viewBox="0 0 14 14" fill="none"><path d="M3.500 3V.5h10V10.500H11M.5 3.500h10v10H.5z" stroke="currentColor" /></svg>
        <svg width="14" height="14" viewBox="0 0 14 14" fill="none"><path d="M.5.500l13 13M13.500.5l-13 13" stroke="currentColor" /></svg>
      </WinButtons>
    </TitleBar>

    <TabStrip>
      <FileTab>文件</FileTab>
      <MenuTab $active>主屏幕</MenuTab>
      {MENU.map((m) => <MenuTab key={m}>{m}</MenuTab>)}
      <Collapse>
        <svg width="11" height="9" viewBox="0 0 11 9" fill="none"><path d="M5.500 1L10.500 5.500 9 8 5.500 5 2 8 .5 5.500z" fill="#eee" stroke="#666" /></svg>
      </Collapse>
    </TabStrip>

    <Ribbon>
      {RIBBON.map((g) => (
        <RibbonGroup key={g.items[0].label} $w={g.w}>
          {g.items.map(({ w, label, Icon, off, active }) => (
            <RibbonItem key={label} $w={w} $active={active}>
              <RibbonIcon><Icon /></RibbonIcon>
              <RibbonLabel $off={off}>{label}</RibbonLabel>
            </RibbonItem>
          ))}
        </RibbonGroup>
      ))}
    </Ribbon>

    <Main>
      <LeftPanel>
        <PanelHeader>
          组合浏览器
          <PanelTools>
            <svg width="13" height="11" viewBox="0 0 13 11"><path d="M0 0l6 5.500L0 11zM7 0l6 5.500L7 11z" fill="#3d5a73" /></svg>
            <svg width="11" height="11" viewBox="0 0 11 11"><path d="M1 1l9 9M10 1l-9 9" stroke="#3d5a73" strokeWidth="2.400" /></svg>
          </PanelTools>
        </PanelHeader>
        <ModelTabs>
          <ModelTab $active>模型</ModelTab>
          <ModelTab>任务</ModelTab>
        </ModelTabs>
        <TreePanel>
          <TreeList>
            {TREE.map(({ level, exp, label, Icon, branch, off }) => (
              <TreeRowBox key={label} $level={level} $off={off}>
                {branch && <Branch $last={branch === "last"} />}
                <Expander $kind={exp} />
                <TreeIcon><Icon /></TreeIcon>
                {label}
              </TreeRowBox>
            ))}
          </TreeList>
          <ScrollBar>
            <ScrollArrow />
            <ScrollThumb />
            <ScrollArrow $down />
          </ScrollBar>
        </TreePanel>
        <PropsPanel>
          <PropsHead>
            <PropsHeadCell>属性</PropsHeadCell>
            <PropsHeadCell $second>值</PropsHeadCell>
          </PropsHead>
          <PropsGroup>基本信息</PropsGroup>
          <PropsRow>
            <PropIndent />
            <PropName>显示模式</PropName>
            <PropValue />
          </PropsRow>
          <PropsRow>
            <PropIndent $last />
            <PropName $alt>可见性</PropName>
            <PropValue $alt>是</PropValue>
          </PropsRow>
        </PropsPanel>
        <BottomTabs>
          <BottomTab $active>视图</BottomTab>
          <BottomTab>数据</BottomTab>
        </BottomTabs>
      </LeftPanel>

      <RightPane>
        <Toolbar>
          <ToolBtn $w={37}><CameraIcon /></ToolBtn>
          <ToolBtn $w={38}><PrinterIcon /></ToolBtn>
          <ToolSep />
          <ToolBtn $w={34} $ml={1}><MeasureIcon /></ToolBtn>
          <ToolBtn $w={9}><Chevron /></ToolBtn>
          <ToolBtn $w={28} $ml={9}><ProhibitIcon /></ToolBtn>
          <ToolBtn $w={14}><Chevron /></ToolBtn>
          <ToolSep $ml={4} />
          <ToolBtn $w={38}><ZoomBoxIcon /></ToolBtn>
          <ToolBtn $w={40}><FitIcon /></ToolBtn>
          <ToolBtn $w={36}><IsoIcon /></ToolBtn>
          <ToolBtn $w={34}><AxesIcon /></ToolBtn>
          <ToolBtn $w={10}><Chevron /></ToolBtn>
          <ToolSep $ml={6} />
          <ToolBtn $w={40}><EyeIcon /></ToolBtn>
          <ToolBtn $w={36}><SplitIcon /></ToolBtn>
          <ToolSep $ml={2} />
          <ToolBtn $w={39}><BulbCube /></ToolBtn>
          <ToolBtn $w={38}><BulbCube dark /></ToolBtn>
        </Toolbar>
        <Viewport>
          <Dumbbell />
          <ViewTab>
            <ViewTabIcon><LogoIcon s={18} /></ViewTabIcon>
            小哑铃-三维
          </ViewTab>
        </Viewport>
      </RightPane>
    </Main>

    <StatusBar>
      <span>Preselected: 并集 - _________.Fusion.;#5;:M;FUS;:T1013:2:F.Face2 (-34.282, -23.2554, 7.10543e-15)</span>
      <StatusRight>3.7e+02 mm x 2.1e+02 mm</StatusRight>
    </StatusBar>
  </Page>
);

export default App;
